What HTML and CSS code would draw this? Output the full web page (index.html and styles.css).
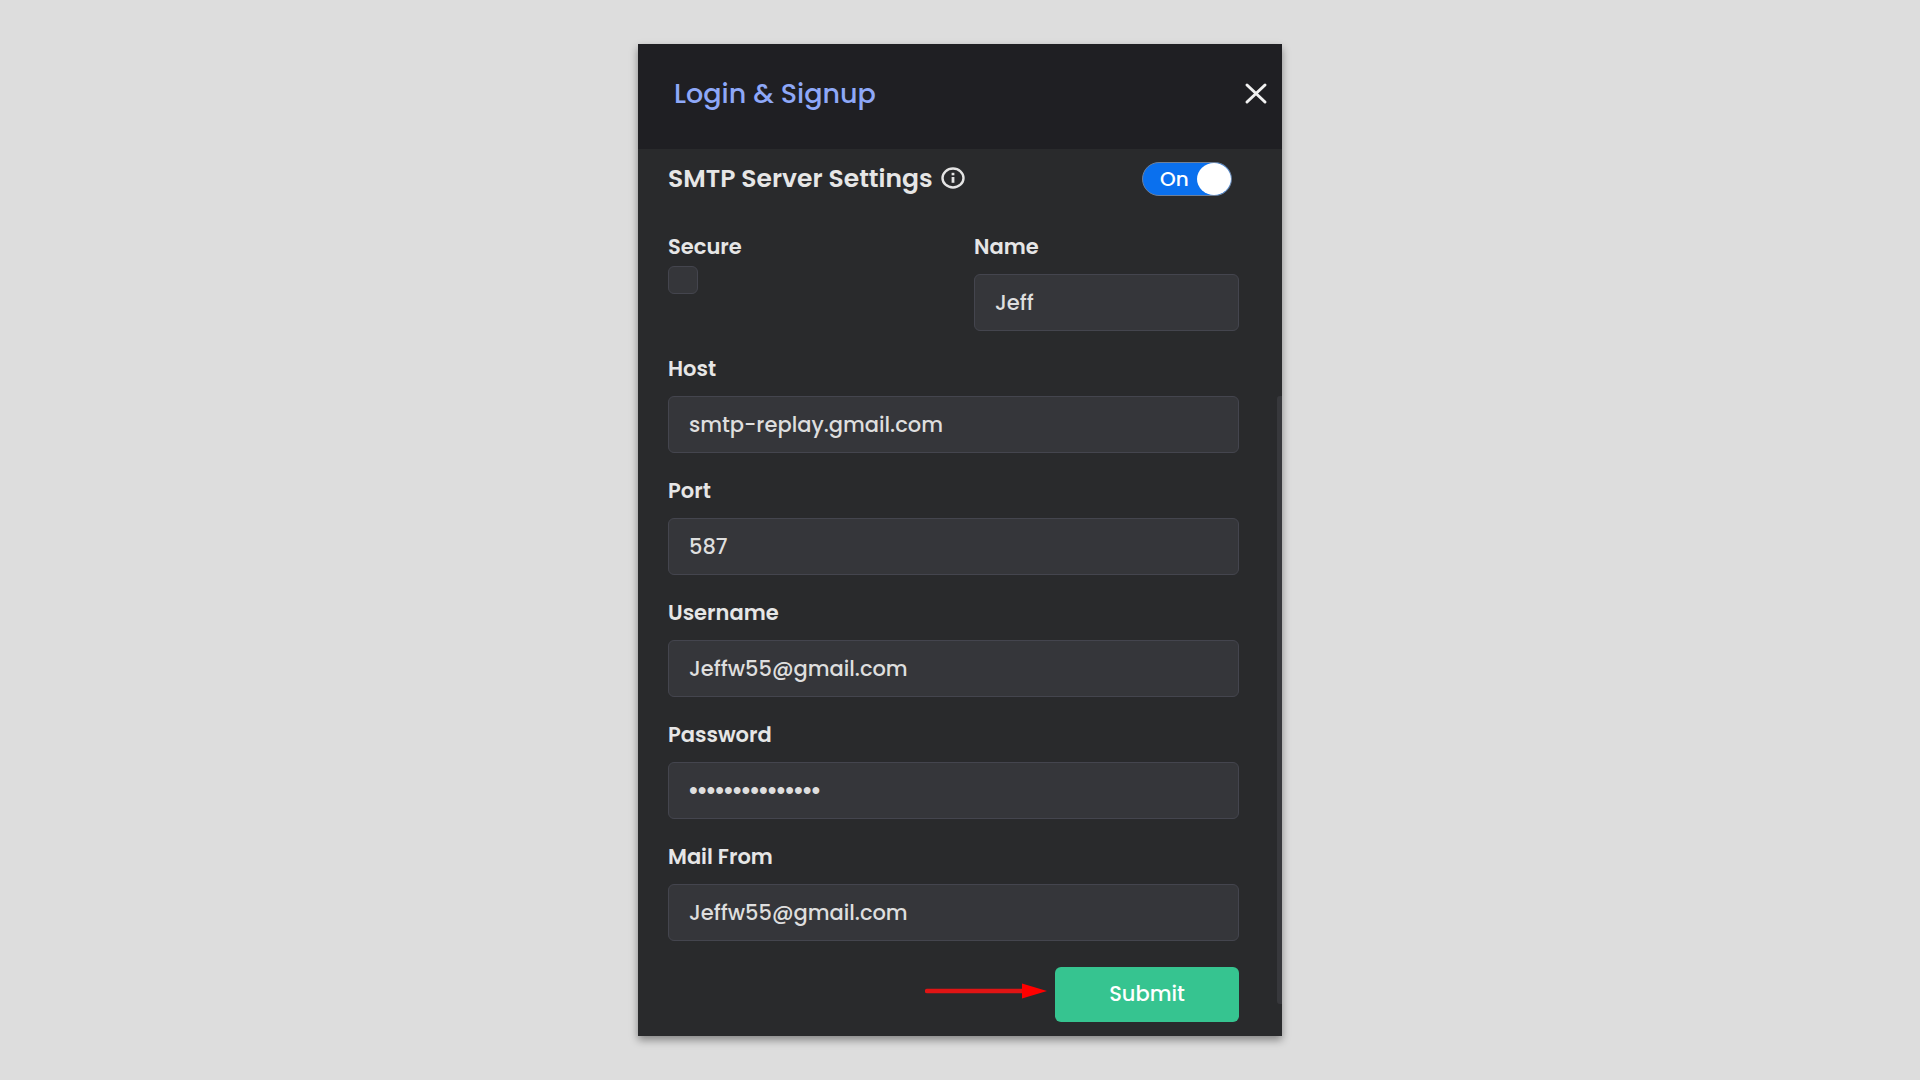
FILE: index.html
```html
<!DOCTYPE html>
<html lang="en">
<head>
  <meta charset="UTF-8">
  <meta name="viewport" content="width=device-width, initial-scale=1.0">
  <title>Login &amp; Signup</title>
  <link rel="stylesheet" href="styles.css">
</head>
<body>
  <main class="panel">
    <header class="panel-header">
      <h1>Login &amp; Signup</h1>
      <button class="close-button" type="button" aria-label="Close">
        <svg width="24" height="24" viewBox="0 0 24 24" fill="none" stroke="#f1f1f1" stroke-width="3" stroke-linecap="round">
          <path d="M3 3 L21 20 M21 3 L3 20"/>
        </svg>
      </button>
    </header>

    <form class="panel-body">
      <div class="section-head">
        <h2>SMTP Server Settings</h2>
        <svg class="info-icon" width="24" height="24" viewBox="0 0 24 24" fill="none" stroke="#e4e4e4">
          <ellipse cx="12" cy="11" rx="10.5" ry="9.5" stroke-width="2.4"/>
          <path d="M12 10 V15.8" stroke-width="2.8"/>
          <path d="M12 5.8 V8.3" stroke-width="2.8"/>
        </svg>
        <label class="switch">
          <input type="checkbox" aria-label="Enable SMTP server" checked>
          <span>On</span>
        </label>
      </div>

      <div class="fields">
        <div class="field-row">
          <div class="field field-check">
            <label for="secure">Secure</label>
            <input type="checkbox" id="secure">
          </div>
          <div class="field">
            <label for="name">Name</label>
            <input type="text" id="name" value="Jeff">
          </div>
        </div>
        <div class="field">
          <label for="host">Host</label>
          <input type="text" id="host" value="smtp-replay.gmail.com">
        </div>
        <div class="field">
          <label for="port">Port</label>
          <input type="text" id="port" value="587">
        </div>
        <div class="field">
          <label for="username">Username</label>
          <input type="text" id="username" value="Jeffw55@gmail.com">
        </div>
        <div class="field">
          <label for="password">Password</label>
          <input type="password" id="password" value="smtpmailpasswrd">
        </div>
        <div class="field">
          <label for="mail-from">Mail From</label>
          <input type="text" id="mail-from" value="Jeffw55@gmail.com">
        </div>
      </div>

      <div class="actions">
        <svg class="arrow" width="122" height="48" viewBox="0 0 122 48">
          <path d="M2 24 H100" stroke="#e01414" stroke-width="4.5" stroke-linecap="round"/>
          <path d="M97 16.5 L122 24 L97 31.5 Z" fill="#ff0000"/>
        </svg>
        <button class="submit-button" type="submit">Submit</button>
      </div>
    </form>

    <div class="scroll-thumb"></div>
  </main>
</body>
</html>
```
FILE: styles.css
```css
* {
  box-sizing: border-box;
}

body {
  background-color: #dddddd;
  font-family: 'Poppins', 'Inter', sans-serif;
  color: #e6e6e6;
  margin: 0;
  padding: 44px 0;
}

h1, h2 {
  margin: 0;
}

.panel {
  position: relative;
  max-width: 644px;
  margin: 0 auto;
  background-color: #292a2c;
  box-shadow: 0 4px 8px rgba(0, 0, 0, 0.4);
}

.panel-header {
  display: flex;
  justify-content: space-between;
  align-items: center;
  padding: 34px 14px 39px 36px;
  background-color: #1f1f23;
}

.panel-header h1 {
  color: #8ea8f8;
  font-size: 27px;
  font-weight: 500;
  line-height: 32px;
}

.close-button {
  display: flex;
  padding: 0;
  border: none;
  background: none;
  cursor: pointer;
}

.panel-body {
  padding: 13px 43px 14px 30px;
}

.section-head {
  display: flex;
  align-items: center;
  height: 34px;
  margin-bottom: 37px;
}

.section-head h2 {
  font-size: 25px;
  font-weight: 600;
  line-height: 34px;
}

.info-icon {
  margin-left: 8px;
}

.switch {
  display: flex;
  align-items: center;
  justify-content: space-between;
  width: 90px;
  height: 34px;
  margin-left: auto;
  margin-right: 7px;
  padding-left: 17px;
  border: 1px solid #6d7f99;
  border-radius: 17px;
  background-color: #0a70ee;
  color: white;
  font-size: 20px;
  font-weight: 500;
  cursor: pointer;
}

/* the checkbox itself is the knob */
.switch input {
  appearance: none;
  order: 1;
  width: 34px;
  height: 32px;
  margin: 0;
  border-radius: 50%;
  background-color: white;
}

.fields {
  display: flex;
  flex-direction: column;
  gap: 24px;
}

.field-row {
  display: flex;
  justify-content: space-between;
}

.field-row .field {
  width: 265px;
}

.field {
  display: flex;
  flex-direction: column;
  gap: 13px;
}

.field label {
  font-size: 21px;
  font-weight: 600;
  line-height: 28px;
}

.field input {
  height: 57px;
  padding: 0 20px;
  border: 1px solid #44454e;
  border-radius: 6px;
  background-color: #35363a;
  color: #dedede;
  font-family: inherit;
  font-size: 21px;
  font-weight: 500;
}

.field input[type="password"] {
  font-family: 'Liberation Sans', sans-serif;
  font-size: 25px;
}

.field-check {
  gap: 5px;
}

.field input[type="checkbox"] {
  appearance: none;
  width: 30px;
  height: 28px;
  margin: 0;
  padding: 0;
}

.actions {
  display: flex;
  justify-content: flex-end;
  gap: 8px;
  margin-top: 26px;
}

.submit-button {
  width: 184px;
  height: 55px;
  padding: 0 0 2px;
  border: none;
  border-radius: 6px;
  background-color: #36c490;
  color: white;
  font-family: inherit;
  font-size: 21px;
  font-weight: 500;
  cursor: pointer;
}

.scroll-thumb {
  position: absolute;
  top: 352px;
  right: 0;
  bottom: 32px;
  width: 5px;
  border-radius: 3px 0 0 3px;
  background-color: #37383c;
}
```
